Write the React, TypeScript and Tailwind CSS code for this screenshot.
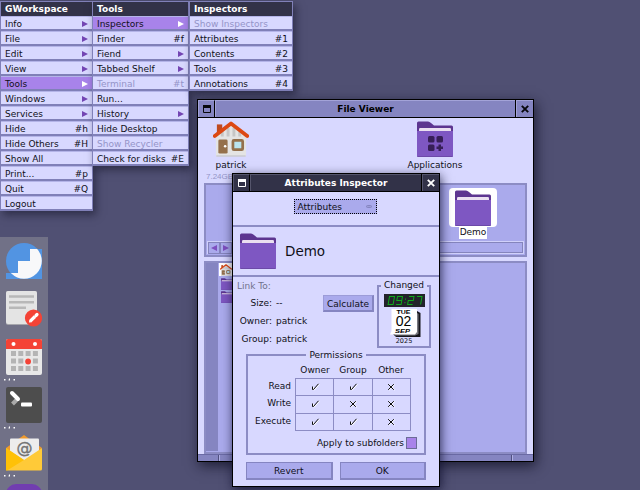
import React from "react";

type Item = { label: string; hint?: string; sub?: boolean; active?: boolean; disabled?: boolean };

const workspaceItems: Item[] = [
  { label: "Info", sub: true },
  { label: "File", sub: true },
  { label: "Edit", sub: true },
  { label: "View", sub: true },
  { label: "Tools", sub: true, active: true },
  { label: "Windows", sub: true },
  { label: "Services", sub: true },
  { label: "Hide", hint: "#h" },
  { label: "Hide Others", hint: "#H" },
  { label: "Show All" },
  { label: "Print...", hint: "#p" },
  { label: "Quit", hint: "#Q" },
  { label: "Logout" },
];

const toolItems: Item[] = [
  { label: "Inspectors", sub: true, active: true },
  { label: "Finder", hint: "#f" },
  { label: "Fiend", sub: true },
  { label: "Tabbed Shelf", sub: true },
  { label: "Terminal", hint: "#t", disabled: true },
  { label: "Run..." },
  { label: "History", sub: true },
  { label: "Hide Desktop" },
  { label: "Show Recycler", disabled: true },
  { label: "Check for disks", hint: "#E" },
];

const inspectorItems: Item[] = [
  { label: "Show Inspectors", disabled: true },
  { label: "Attributes", hint: "#1" },
  { label: "Contents", hint: "#2" },
  { label: "Tools", hint: "#3" },
  { label: "Annotations", hint: "#4" },
];

function Menu({ title, items, className }: { title: string; items: Item[]; className: string }) {
  return (
    <div className={`absolute top-px border-x border-t border-[#8080b8] shadow-[3px_4px_8px_rgba(20,20,40,0.55)] ${className}`}>
      <div className="flex h-[14px] items-center bg-[#323248] pl-[4px] font-bold text-white">{title}</div>
      {items.map((it) => (
        <div
          key={it.label}
          className={`flex h-[15px] items-center justify-between border-t border-b-2 border-t-[#b4b4e8] border-b-[#8080b8] pt-px pr-[4px] pl-[4px] ${
            it.active ? "bg-[#a883ea]" : "bg-[#d8d8ff]"
          } ${it.disabled ? "text-[#9494c8]" : "text-[#101018]"}`}
        >
          <span>{it.label}</span>
          {it.hint && <span>{it.hint}</span>}
          {it.sub && (
            <svg width="6" height="6" viewBox="0 0 6 6">
              <path d="M0 0L6 3L0 6Z" fill={it.active ? "#fff" : "#7446b4"} />
            </svg>
          )}
        </div>
      ))}
    </div>
  );
}

function Folder({ size = 36, apps = false }: { size?: number; apps?: boolean }) {
  return (
    <svg width={size} height={size} viewBox="0 0 36 36" className="block shrink-0">
      <path d="M0 2Q0 .5 1.500 .5H11Q12.500 .5 14 2L17 4.500H34.500Q36 4.500 36 6V20H0Z" fill="#5d3590" />
      <rect x="2" y="7" width="32" height="6" rx="1.200" fill="#eadff0" />
      <path d="M0 10H36V34.500Q36 36 34.500 36H1.500Q0 36 0 34.500Z" fill="#7e57c2" />
      <path d="M0 35H36Q36 36 34.500 36H1.500Q0 36 0 35Z" fill="#6c49a8" />
      {apps && (
        <g fill="#371f57">
          <rect x="11" y="15" width="6.500" height="6.500" rx="1.500" />
          <rect x="19.500" y="15" width="6.500" height="6.500" rx="1.500" />
          <rect x="11" y="23.500" width="6.500" height="6.500" rx="1.500" />
          <path d="M21.500 23.500h2.500v2h2v2.500h-2v2h-2.500v-2h-2v-2.500h2z" />
        </g>
      )}
    </svg>
  );
}

function House({ size = 36 }: { size?: number }) {
  return (
    <svg width={size} height={size} viewBox="0 0 37 37" className="block shrink-0">
      <rect x="4" y="3.500" width="5.500" height="12" fill="#bf4a20" />
      <path d="M3 14L18.500 3L34 14V35.500Q34 36.500 33 36.500H4Q3 36.500 3 35.500Z" fill="#e4e4e4" />
      <path d="M8 11h3v5H8zM14 7h3v9h-3zM20 7h3v9h-3zM26 11h3v5h-3z" fill="#c6c6c6" />
      <path d="M1.800 15.500L18.500 2.500L35.200 15.500" fill="none" stroke="#dc4814" strokeWidth="3.800" strokeLinecap="round" strokeLinejoin="round" />
      <rect x="5.500" y="19" width="9.500" height="14.500" rx="1.500" fill="#94704c" />
      <circle cx="12.500" cy="26" r="1.300" fill="#fff" />
      <rect x="20.500" y="20" width="10" height="9.500" rx="1" fill="#b9e4f0" stroke="#94704c" strokeWidth="2.800" />
      <path d="M3.500 36H33.500" stroke="#bcbcc4" />
    </svg>
  );
}

function TitleBar({ title, dark }: { title: string; dark?: boolean }) {
  const tone = dark
    ? "bg-[#323248] text-white border-t-[#55556c] border-l-[#55556c]"
    : "bg-[#8585c1] text-black border-t-[#a3a3d8] border-l-[#a3a3d8]";
  const color = dark ? "#fff" : "#08080c";
  return (
    <div className="flex h-[18px] shrink-0 border-b border-black font-bold">
      <div className={`flex w-[17px] items-center justify-center border-t border-r border-l border-r-black ${tone}`}>
        <svg width="8" height="8" viewBox="0 0 8 8">
          <path d="M.5 1.500H7.500V7.500H.5Z" fill="none" stroke={color} />
          <path d="M0 0H8V3H0Z" fill={color} />
        </svg>
      </div>
      <div className={`flex flex-1 items-center justify-center border-t border-l pr-px ${tone}`}>{title}</div>
      <div className={`flex w-[17px] items-center justify-center border-t border-l shadow-[-1px_0_0_#000] ${tone}`}>
        <svg width="8" height="8" viewBox="0 0 8 8">
          <path d="M.8 .8L7.200 7.200M7.200 .8L.8 7.200" stroke={color} strokeWidth="1.900" />
        </svg>
      </div>
    </div>
  );
}

function Arrow({ left }: { left?: boolean }) {
  return (
    <div className="flex h-[12px] w-[12px] items-center justify-center border border-[#8484bc] bg-[#aaaaec]">
      <svg width="6" height="6" viewBox="0 0 6 6">
        <path d={left ? "M6 0L0 3L6 6Z" : "M0 0L6 3L0 6Z"} fill="#7e50c0" />
      </svg>
    </div>
  );
}

function FileViewer() {
  return (
    <div className="absolute top-[99px] left-[197px] flex h-[363px] w-[337px] flex-col border border-black bg-[#d8d8ff] shadow-[2px_4px_12px_rgba(15,15,35,0.75)]">
      <TitleBar title="File Viewer" />
      <div className="flex h-[55px] pt-[3px]">
        <div className="ml-[7px] flex w-[52px] flex-col items-center">
          <House />
          <span className="mt-[2px]">patrick</span>
        </div>
        <div className="ml-[148px] flex w-[60px] flex-col items-center">
          <Folder apps />
          <span className="mt-[2px]">Applications</span>
        </div>
      </div>
      <div className="h-[10px] pl-[8px] font-['Liberation_Sans',sans-serif] text-[8px] leading-[8px] text-[#9494c8]">7.24GB</div>
      <div className="mx-[6px] flex h-[74px] flex-col border-2 border-[#8c8cc4] bg-[#aaaaec]">
        <div className="flex flex-1 justify-end pt-[3px]">
          <div className="mr-[28px] flex w-[48px] flex-col items-center">
            <div className="flex h-[39px] w-[48px] items-center justify-center rounded-[4px] bg-white">
              <Folder />
            </div>
            <span className="h-[12px] bg-white px-px leading-[11px]">Demo</span>
          </div>
        </div>
        <div className="mx-px mb-px flex h-[13px] border border-[#d0d0fa] bg-[#aaaaec]">
          <Arrow left />
          <Arrow />
          <div className="h-[11px] flex-1 border border-[#8484bc]" />
        </div>
      </div>
      <div className="mx-[6px] mt-[4px] flex h-[193px] border-2 border-[#8c8cc4] bg-[#aaaaec]">
        <div className="mb-px w-[12px] bg-[#8585c1]" />
        <div className="w-[14px] border-l border-[#aaaaec]">
          <div className="flex h-[13px] items-center bg-white pl-px">
            <House size={12} />
          </div>
          <div className="flex flex-col gap-px pt-[2px] pl-[2px]">
            <Folder size={12} />
            <Folder size={12} />
          </div>
        </div>
      </div>
      <div className="mt-auto flex h-[7px] border-t border-[#6a6aa4] bg-[#8585c1]">
        <div className="w-[21px] border-r border-[#505080]" />
        <div className="flex-1 border-l border-[#b0b0e4]" />
        <div className="w-[21px] border-l border-[#b0b0e4] shadow-[-1px_0_0_#505080]" />
      </div>
    </div>
  );
}

function Mark({ ok }: { ok: boolean }) {
  const d = ok ? "M1.500 3.500V6.500H2.500L7.500 .8" : "M1.200 1.200L6.800 6.800M6.800 1.200L1.200 6.800";
  return (
    <svg width="9" height="8" viewBox="0 0 9 8" fill="none">
      <path d={d} stroke="#fff" transform="translate(1 .4)" />
      <path d={d} stroke="#000" strokeWidth=".95" />
    </svg>
  );
}

const permissions: { name: string; values: boolean[] }[] = [
  { name: "Read", values: [true, true, false] },
  { name: "Write", values: [true, false, false] },
  { name: "Execute", values: [true, true, false] },
];

const segments: Record<string, string> = {
  "0": "M0 0H5V8H0Z",
  "9": "M5 4H0V0H5V8H0",
  "2": "M0 0H5V4H0V8H5",
  "7": "M0 0H5V8",
};

function Clock() {
  return (
    <svg width="41" height="13" viewBox="0 0 41 13" className="block shrink-0">
      <rect width="41" height="13" fill="#23232b" />
      <g transform="translate(5.500 2.500) skewX(-10)" fill="none" stroke="#10a81c" strokeWidth="1">
        <path d={segments["0"]} />
        <path d={segments["9"]} transform="translate(8 0)" />
        <path d="M16.500 2v1.200M16.500 5.500v1.200" />
        <path d={segments["2"]} transform="translate(19.500 0)" />
        <path d={segments["7"]} transform="translate(27.500 0)" />
      </g>
    </svg>
  );
}

function CalendarLeaf() {
  return (
    <svg width="31" height="28" viewBox="0 0 31 28" className="mt-[2px] ml-[2px] block shrink-0" fontFamily="Liberation Sans">
      <path d="M27 2L30.500 4V28H6L3 25Z" fill="#16161c" />
      <path d="M26 3L28.500 5V25L25 26.500H4Z" fill="#77777f" />
      <path d="M1.500 0H27V23L25 25.500H0L1.500 22Z" fill="#fff" />
      <text x="13.500" y="4.500" fontSize="6" fontWeight="bold" textAnchor="middle" textLength="14" lengthAdjust="spacingAndGlyphs">TUE</text>
      <text x="13.500" y="17" fontSize="14" textAnchor="middle">02</text>
      <text x="12.500" y="24" fontSize="6" fontStyle="italic" fontWeight="bold" textAnchor="middle" textLength="15" lengthAdjust="spacingAndGlyphs">SEP</text>
    </svg>
  );
}

function Inspector() {
  return (
    <div className="absolute top-[173px] left-[232px] flex h-[314px] w-[208px] flex-col border border-black bg-[#d8d8ff] shadow-[1px_3px_10px_rgba(15,15,45,0.8)]">
      <TitleBar title="Attributes Inspector" dark />
      <div className="flex h-[35px] justify-center border-b-2 border-[#8c8cc4] pt-[7px]">
        <div className="mr-[2px] flex h-[15px] w-[83px] items-center justify-between border border-dotted border-black bg-[#aaaaec] pr-[4px] pl-[3px]">
          <span>Attributes</span>
          <span className="h-[3px] w-[6px] rounded-full border border-[#8585c1] bg-[#9c9cd8]" />
        </div>
      </div>
      <div className="flex h-[50px] shrink-0 items-center border-b-2 border-[#8c8cc4] pl-[7px]">
        <Folder />
        <span className="ml-[9px] text-[13.5px]">Demo</span>
      </div>
      <div className="flex h-[72px] shrink-0">
        <div className="flex w-[90px] flex-col pt-px leading-[18px]">
          <div className="h-[16px] pl-[4px] leading-[17px] text-[#70708c]">Link To:</div>
          {[
            ["Size:", "--"],
            ["Owner:", "patrick"],
            ["Group:", "patrick"],
          ].map(([k, v]) => (
            <div key={k} className="flex h-[18px]">
              <span className="w-[39px] text-right">{k}</span>
              <span className="ml-[4px]">{v}</span>
            </div>
          ))}
        </div>
        <div className="mt-[18px] flex h-[17px] w-[51px] items-center justify-center border-2 border-t border-l border-[#8585c1] border-t-[#9c9cd8] border-l-[#9c9cd8] bg-[#aaaaec] pt-px">
          Calculate
        </div>
        <fieldset className="mt-[2px] ml-[3px] flex h-[69px] w-[54px] min-w-0 flex-col items-center border-2 border-[#8c8cc4]">
          <legend className="mx-auto h-[13px] px-[3px] leading-[13px]">Changed</legend>
          <div className="flex flex-col items-center pt-[2px]">
            <Clock />
            <CalendarLeaf />
            <span className="text-[6.5px] leading-[9px]">2025</span>
          </div>
        </fieldset>
      </div>
      <fieldset className="mx-[13px] h-[106px] shrink-0 border-2 border-[#8c8cc4]">
        <legend className="mx-auto h-[12px] px-[3px] leading-[12px]">Permissions</legend>
        <div className="grid grid-cols-[43px_38px_38px_38px] pt-px pl-[5px] leading-[16px]">
          <span />
          <span className="text-center">Owner</span>
          <span className="text-center">Group</span>
          <span className="text-center">Other</span>
        </div>
        <div className="grid grid-cols-[47px_116px]">
          <div className="pr-[4px] text-right leading-[17.3px]">
            {permissions.map((p) => (
              <div key={p.name}>{p.name}</div>
            ))}
          </div>
          <div className="grid h-[53px] grid-cols-3 gap-px border border-[#8c8cc4] bg-[#8c8cc4]">
            {permissions.flatMap((p) =>
              p.values.map((v, i) => (
                <div key={p.name + i} className="flex items-center justify-center bg-[#d8d8ff] pl-px">
                  <Mark ok={v} />
                </div>
              )),
            )}
          </div>
        </div>
        <div className="mt-[5px] flex h-[13px] items-center justify-end pr-[7px]">
          <span>Apply to subfolders</span>
          <span className="ml-[2px] h-[12px] w-[11px] border border-[#6c6c98] bg-[#a883ea]" />
        </div>
      </fieldset>
      <div className="mx-[13px] mt-[7px] flex gap-[7px]">
        {["Revert", "OK"].map((t) => (
          <div key={t} className="flex h-[18px] flex-1 items-center justify-center border-2 border-t border-l border-[#8585c1] bg-[#aaaaec]">
            {t}
          </div>
        ))}
      </div>
    </div>
  );
}

function Dots() {
  return (
    <svg width="12" height="3" viewBox="0 0 12 3" className="-ml-[2px] block" fill="#fff">
      <path d="M0 1h1.500v1.500H0zM5 .5h1v2H4.500zM9.500 1H11v1.500H9.500z" />
    </svg>
  );
}

function Dock() {
  return (
    <div className="absolute top-[237px] left-0 flex h-[253px] w-[48px] flex-col overflow-hidden bg-[#717187] pt-[6px] pl-[6px]">
      <div className="h-[48px] shrink-0">
        <svg width="36" height="36" viewBox="0 0 36 36" className="block">
          <clipPath id="steps">
            <path d="M24 6H36V36H0V30H12V18H24Z" />
          </clipPath>
          <circle cx="18" cy="18" r="18" fill="#5294e2" />
          <path d="M24 6H36V36H0V30H12V18H24Z" fill="#5294e2" />
          <circle cx="18" cy="18" r="17.800" fill="#f8f8fa" clipPath="url(#steps)" />
        </svg>
      </div>
      <div className="h-[48px] shrink-0">
        <svg width="36" height="36" viewBox="0 0 36 36" className="block">
          <rect width="31" height="34" rx="2" fill="#a6a6ac" />
          <rect width="31" height="33" rx="2" fill="#e4e4e4" />
          <path d="M3 5.500H28M3 11.200H28M3 16.800H20" stroke="#b8b8b8" strokeWidth="2.400" />
          <circle cx="27.500" cy="27" r="8.600" fill="#f44336" />
          <path d="M24.300 30.200L29 25.500" stroke="#fff" strokeWidth="3.200" />
          <path d="M30 24.500L31 23.500" stroke="#fff" strokeWidth="3.200" strokeLinecap="round" />
          <path d="M23 31.500L23.300 28.700L25.800 31.200Z" fill="#fff" />
        </svg>
      </div>
      <div className="h-[48px] shrink-0">
        <svg width="36" height="36" viewBox="0 0 36 36" className="block">
          <rect width="36" height="36" rx="2" fill="#e8e8e8" />
          <path d="M0 2Q0 0 2 0H34Q36 0 36 2V10H0Z" fill="#f44336" />
          <circle cx="7.500" cy="5" r="2" fill="#fff" />
          <circle cx="29" cy="5" r="2" fill="#fff" />
          <path d="M5 12h5v5H5zM12.300 12h5v5h-5zM19.600 12h5v5h-5zM26.900 12h5v5h-5zM5 19.500h5v5H5zM12.300 19.500h5v5h-5zM26.900 19.500h5v5h-5zM5 27h5v5H5zM12.300 27h5v5h-5zM19.600 27h5v5h-5zM26.900 27h5v5h-5z" fill="#b4b4b4" />
          <circle cx="22.100" cy="22.500" r="2.900" fill="#f44336" />
        </svg>
        <div className="pt-[3px]"><Dots /></div>
      </div>
      <div className="h-[48px] shrink-0">
        <svg width="36" height="36" viewBox="0 0 36 36" className="block">
          <rect width="36" height="36" rx="2" fill="#4d4d4d" />
          <path d="M12 11.500L6.500 17" stroke="#aaa" strokeWidth="4" strokeLinecap="butt" />
          <path d="M6 6L12 12" stroke="#fff" strokeWidth="4" strokeLinecap="round" />
          <rect x="15" y="15.500" width="11" height="4" rx="1" fill="#fff" />
        </svg>
        <div className="pt-[3px]"><Dots /></div>
      </div>
      <div className="h-[48px] shrink-0">
        <svg width="36" height="36" viewBox="0 0 36 36" className="block">
          <path d="M0 13L18 0L36 13L18 26Z" fill="#ef9a2d" />
          <path d="M4 4.500Q4 3.500 5 3.500H32Q33 3.500 33 4.500V30H4Z" fill="#ededed" />
          <path d="M0 13L18 25L36 13V34Q36 35.500 34.500 35.500H1.500Q0 35.500 0 34Z" fill="#ffca38" />
          <path d="M0 13L18 25L1 35.500H0Z" fill="#ffc107" />
          <text x="18.500" y="18" fontSize="16" textAnchor="middle" fill="#747474" stroke="#747474" strokeWidth=".4" fontFamily="DejaVu Sans">@</text>
        </svg>
        <div className="pt-[3px]"><Dots /></div>
      </div>
      <div className="mt-px h-[30px] w-[36px] shrink-0 rounded-t-[10px] bg-[#713db0]" />
    </div>
  );
}

export default function App() {
  return (
    <div className="relative h-[490px] w-[640px] overflow-hidden bg-[#505073] font-['DejaVu_Sans',sans-serif] text-[9px] leading-[12px] whitespace-nowrap text-[#101018]">
      <Menu title="GWorkspace" items={workspaceItems} className="left-0 w-[93px]" />
      <Menu title="Tools" items={toolItems} className="left-[92px] w-[97px]" />
      <Menu title="Inspectors" items={inspectorItems} className="left-[189px] w-[104px]" />
      <Dock />
      <FileViewer />
      <Inspector />
    </div>
  );
}
